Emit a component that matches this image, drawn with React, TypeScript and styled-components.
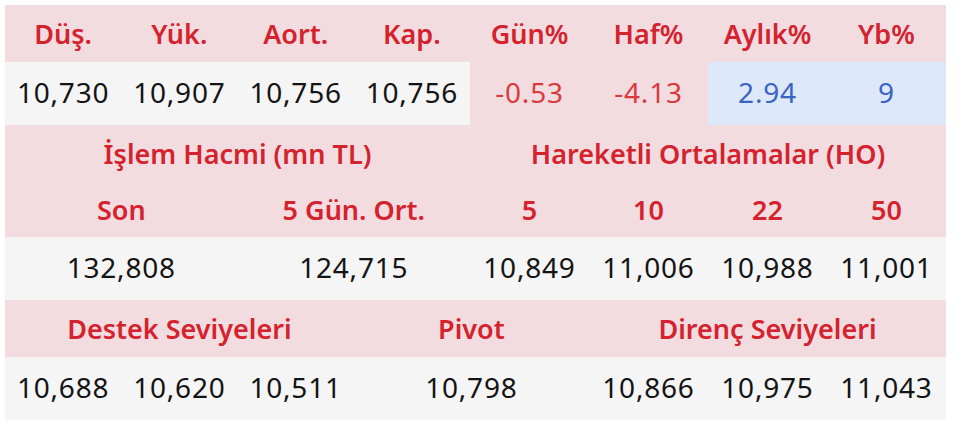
import styled, { createGlobalStyle } from "styled-components";

const GlobalStyle = createGlobalStyle`
  *{box-sizing:border-box}
  body{margin:0;padding:5px 0 0 5px;background:#fff;font-family:'Noto Sans','Open Sans',sans-serif;}
`;

const Table = styled.table`
  width:941px; border-collapse:collapse; table-layout:fixed;
`;

const Col = styled.col<{ wide?: boolean }>`
  width:${p => p.wide ? 119 : 116.25}px;
`;

type Tone = "plain" | "down" | "up";

const Head = styled.th<{ h?: number }>`
  height:${p => p.h ?? 57}px; padding:0; background:#f2dcdf;
  color:#d4222e; font-size:27px; font-weight:600; text-align:center;
  white-space:nowrap;
`;

const Cell = styled.td<{ tone?: Tone }>`
  height:63px; padding:0 0 3px; text-align:center; white-space:nowrap;
  font-size:28px; font-weight:400; letter-spacing:0.8px;
  background:${p => p.tone === "down" ? "#f2dcdf" : p.tone === "up" ? "#dde8fb" : "#f5f5f5"};
  color:${p => p.tone === "down" ? "#d93a40" : p.tone === "up" ? "#3a64c4" : "#141414"};
`;

const top = [
  { h: "Düş.", v: "10,730" },
  { h: "Yük.", v: "10,907" },
  { h: "Aort.", v: "10,756" },
  { h: "Kap.", v: "10,756" },
  { h: "Gün%", v: "-0.53", tone: "down" as Tone },
  { h: "Haf%", v: "-4.13", tone: "down" as Tone },
  { h: "Aylık%", v: "2.94", tone: "up" as Tone },
  { h: "Yb%", v: "9", tone: "up" as Tone },
];

const ma = [
  { h: "5", v: "10,849" },
  { h: "10", v: "11,006" },
  { h: "22", v: "10,988" },
  { h: "50", v: "11,001" },
];

export default function App() {
  return (
    <>
      <GlobalStyle />
      <Table>
        <colgroup>
          {Array.from({ length: 8 }).map((_, i) => <Col key={i} wide={i >= 4} />)}
        </colgroup>
        <tbody>
          <tr>{top.map(t => <Head key={t.h}>{t.h}</Head>)}</tr>
          <tr>{top.map(t => <Cell key={t.h} tone={t.tone}>{t.v}</Cell>)}</tr>
          <tr>
            <Head colSpan={4}>İşlem Hacmi (mn TL)</Head>
            <Head colSpan={4}>Hareketli Ortalamalar (HO)</Head>
          </tr>
          <tr>
            <Head h={55} colSpan={2}>Son</Head>
            <Head h={55} colSpan={2}>5 Gün. Ort.</Head>
            {ma.map(m => <Head h={55} key={m.h}>{m.h}</Head>)}
          </tr>
          <tr>
            <Cell colSpan={2}>132,808</Cell>
            <Cell colSpan={2}>124,715</Cell>
            {ma.map(m => <Cell key={m.h}>{m.v}</Cell>)}
          </tr>
          <tr>
            <Head colSpan={3}>Destek Seviyeleri</Head>
            <Head colSpan={2}>Pivot</Head>
            <Head colSpan={3}>Direnç Seviyeleri</Head>
          </tr>
          <tr>
            <Cell>10,688</Cell>
            <Cell>10,620</Cell>
            <Cell>10,511</Cell>
            <Cell colSpan={2}>10,798</Cell>
            <Cell>10,866</Cell>
            <Cell>10,975</Cell>
            <Cell>11,043</Cell>
          </tr>
        </tbody>
      </Table>
    </>
  );
}
